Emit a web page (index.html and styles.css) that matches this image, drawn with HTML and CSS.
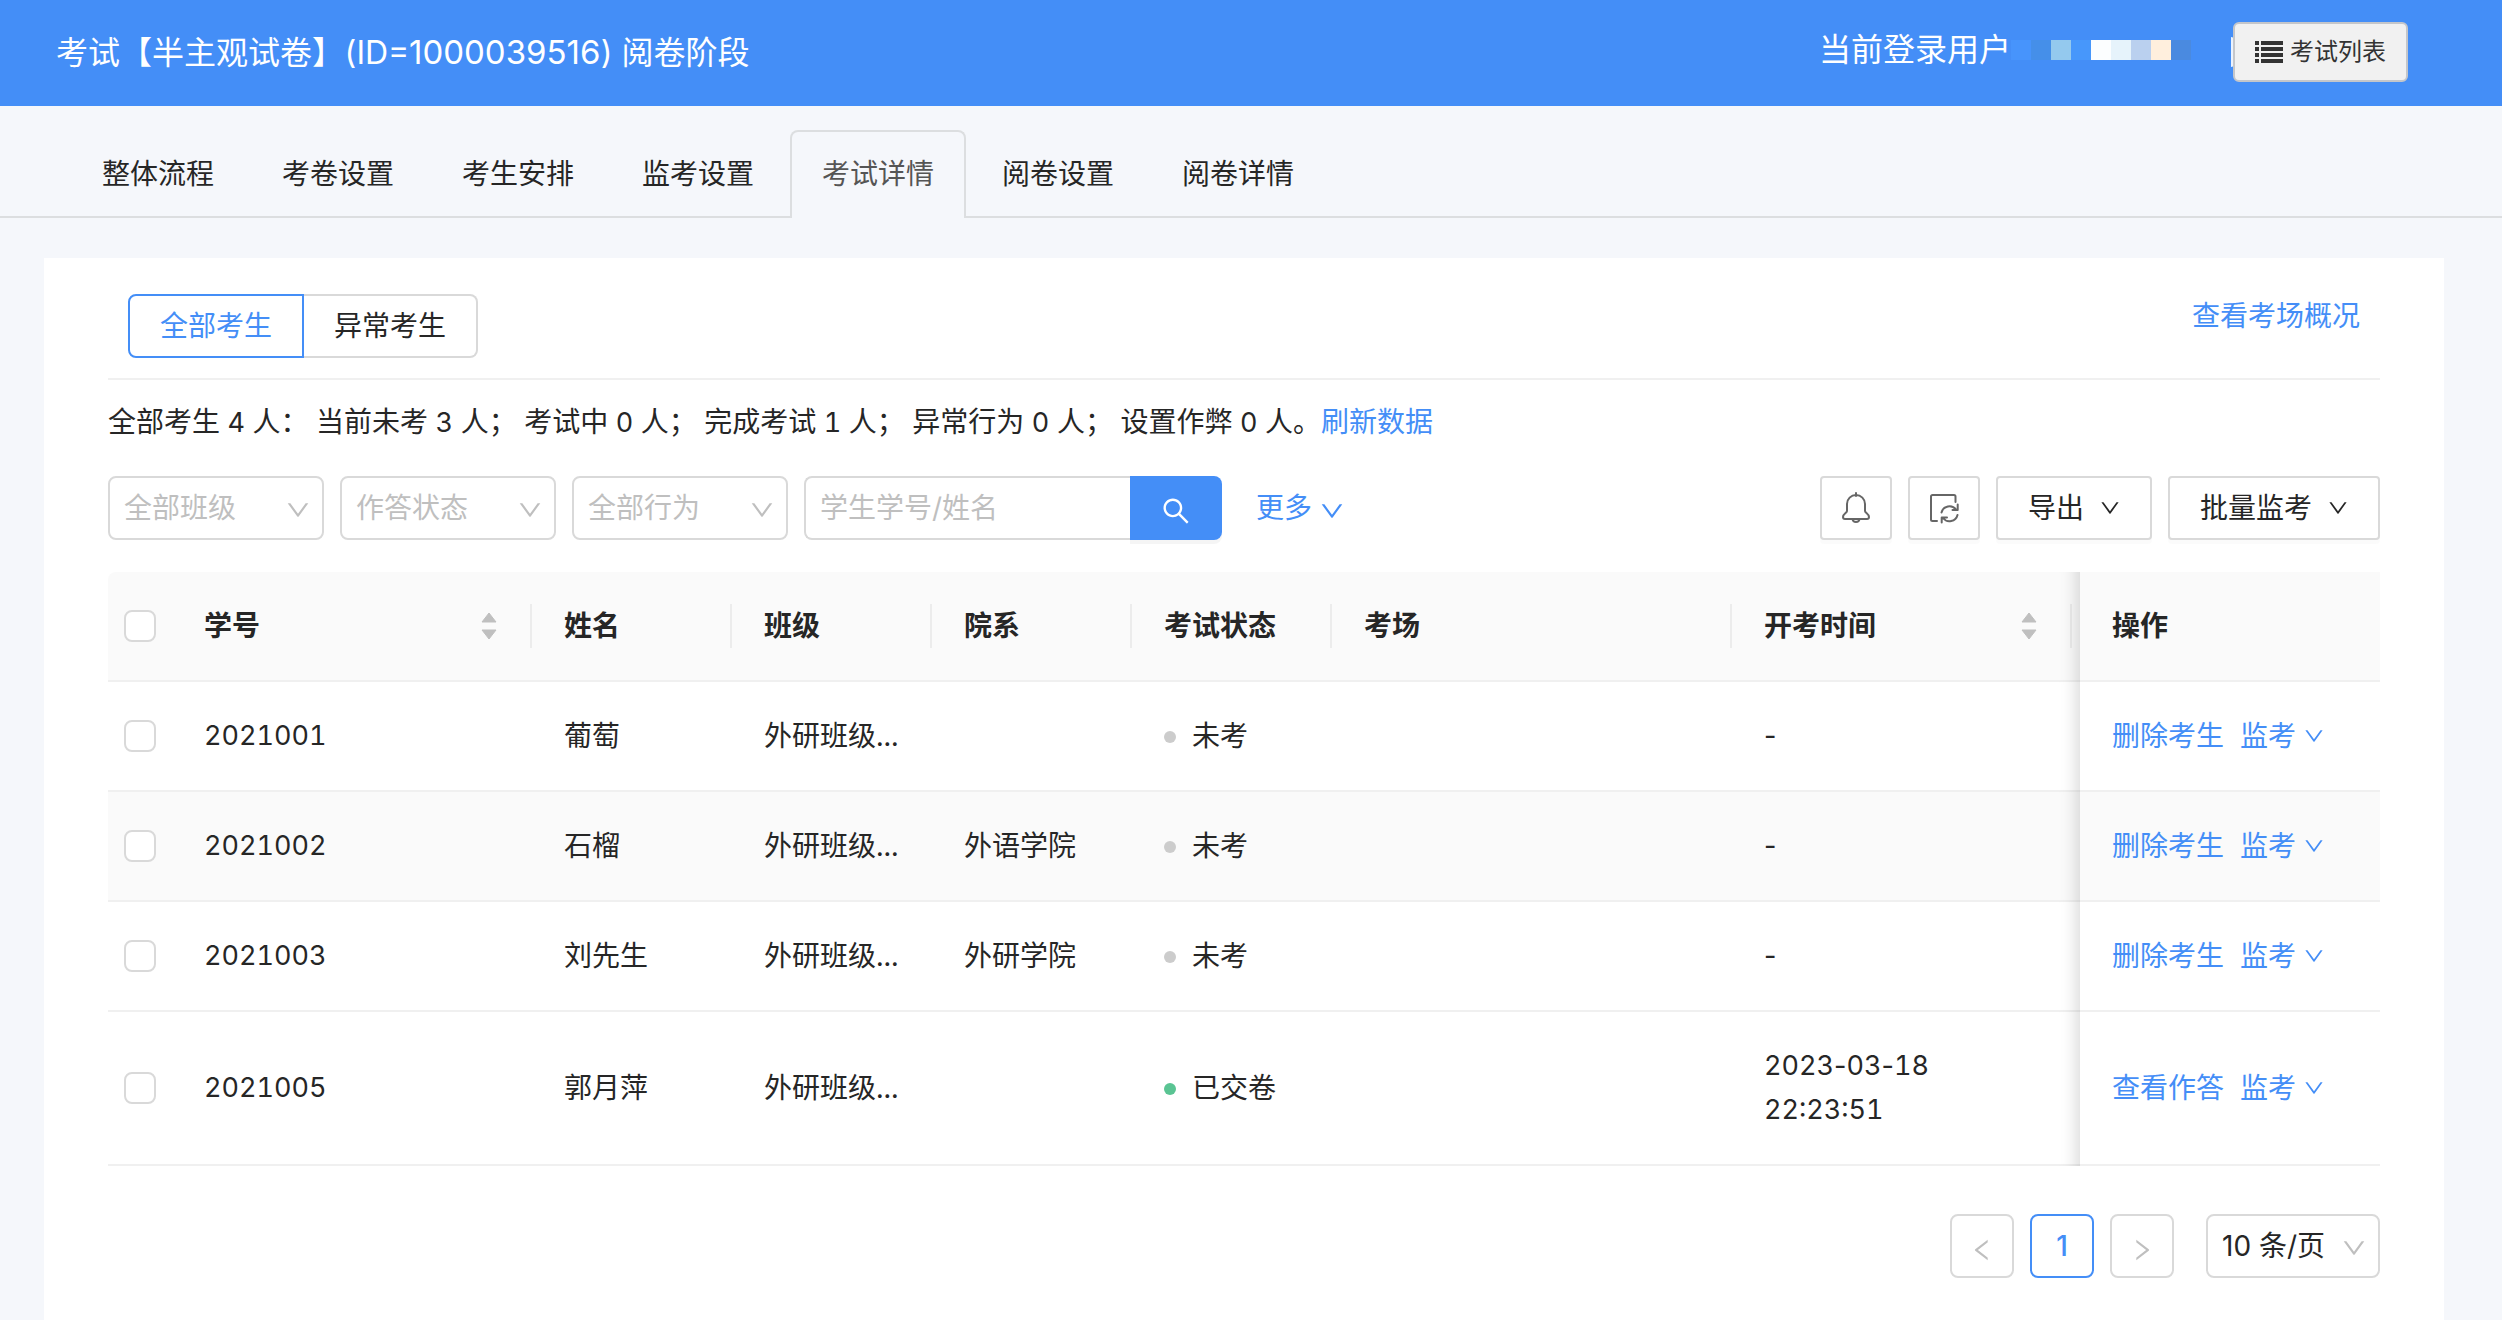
FILE: index.html
```html
<!DOCTYPE html>
<html lang="zh-CN">
<head>
<meta charset="utf-8">
<meta name="viewport" content="width=device-width, initial-scale=1">
<title>考试详情</title>
<link rel="stylesheet" href="styles.css">
</head>
<body>
<svg class="sprite" aria-hidden="true">
  <symbol id="down" viewBox="64 64 896 896"><path d="M884 256h-75c-5.100 0-9.900 2.500-12.900 6.600L512 654.200 227.900 262.600c-3-4.100-7.800-6.600-12.900-6.600h-75c-6.500 0-10.300 7.400-6.500 12.700l352.600 486.100c12.800 17.600 39 17.600 51.700 0l352.600-486.100c3.900-5.300.1-12.700-6.400-12.700z"/></symbol>
  <symbol id="left" viewBox="64 64 896 896"><path d="M724 218.300V141c0-6.700-7.700-10.400-12.900-6.300L260.300 486.800a31.860 31.860 0 0 0 0 50.300l450.800 352.100c5.300 4.100 12.900.4 12.900-6.300v-77.300c0-4.900-2.300-9.600-6.100-12.600l-360-281 360-281.100c3.800-3 6.100-7.700 6.100-12.600z"/></symbol>
  <symbol id="right" viewBox="64 64 896 896"><path transform="matrix(-1 0 0 1 1024 0)" d="M724 218.300V141c0-6.700-7.700-10.400-12.900-6.300L260.300 486.800a31.860 31.860 0 0 0 0 50.300l450.800 352.100c5.300 4.100 12.900.4 12.900-6.300v-77.300c0-4.900-2.300-9.600-6.100-12.600l-360-281 360-281.100c3.800-3 6.100-7.700 6.100-12.600z"/></symbol>
  <symbol id="sort" viewBox="0 0 16 28"><path d="M8 1l7 9H1zM8 27l7-9H1z" stroke="currentColor" stroke-width="1" stroke-linejoin="round"/></symbol>
</svg>

<header class="topbar">
  <h1 class="topbar-title">考试【半主观试卷】(ID=<span class="exam-id">1000039516</span>) 阅卷阶段</h1>
  <div class="topbar-user">
    <span class="user-label">当前登录用户</span>
    <span class="mosaic" aria-hidden="true"><i class="m1"></i><i class="m2"></i><i class="m3"></i><i class="m4"></i><i class="m5"></i><i class="m6"></i><i class="m7"></i><i class="m8"></i><i class="m9"></i></span>
  </div>
  <span class="sliver" aria-hidden="true"></span>
  <button class="list-btn" type="button">
    <svg width="28" height="22" viewBox="0 0 28 22"><path d="M0 0h4v4H0zM6 0h22v4H6zM0 6h4v4H0zM6 6h22v4H6zM0 12h4v4H0zM6 12h22v4H6zM0 18h4v4H0zM6 18h22v4H6z"/></svg>
    考试列表
  </button>
</header>

<nav class="tabs">
  <a class="tab" href="#">整体流程</a>
  <a class="tab" href="#">考卷设置</a>
  <a class="tab" href="#">考生安排</a>
  <a class="tab" href="#">监考设置</a>
  <a class="tab active" href="#">考试详情</a>
  <a class="tab" href="#">阅卷设置</a>
  <a class="tab" href="#">阅卷详情</a>
</nav>

<main class="card">
  <div class="card-head">
    <div class="segment">
      <button class="seg on" type="button">全部考生</button><button class="seg" type="button">异常考生</button>
    </div>
    <a class="link" href="#">查看考场概况</a>
  </div>

  <p class="stats">全部考生 <span class="num">4</span> 人：&nbsp;当前未考 <span class="num">3</span> 人；&nbsp;考试中 <span class="num">0</span> 人；&nbsp;完成考试 <span class="num">1</span> 人；&nbsp;异常行为 <span class="num">0</span> 人；&nbsp;设置作弊 <span class="num">0</span> 人。<a class="link" href="#">刷新数据</a></p>

  <div class="toolbar">
    <span class="picker"><select aria-label="班级"><option>全部班级</option></select><svg class="ic24"><use href="#down"/></svg></span>
    <span class="picker"><select aria-label="状态"><option>作答状态</option></select><svg class="ic24"><use href="#down"/></svg></span>
    <span class="picker"><select aria-label="行为"><option>全部行为</option></select><svg class="ic24"><use href="#down"/></svg></span>
    <form class="search">
      <input type="text" aria-label="搜索" placeholder="学生学号/姓名">
      <button type="button" aria-label="查询"><svg width="28" height="28" viewBox="64 64 896 896"><path d="M909.600 854.500L649.900 594.800C690.200 542.700 712 479 712 412c0-80.200-31.300-155.400-87.900-212.100-56.600-56.700-132-87.900-212.100-87.900s-155.500 31.300-212.100 87.900C143.200 256.500 112 331.800 112 412c0 80.100 31.300 155.500 87.900 212.100C256.500 680.800 331.800 712 412 712c67 0 130.600-21.800 182.700-62l259.700 259.600a8.200 8.200 0 0 0 11.600 0l43.600-43.500a8.200 8.200 0 0 0 0-11.600zM570.400 570.400C528 612.700 471.800 636 412 636s-116-23.300-158.400-65.600C211.300 528 188 471.800 188 412s23.300-116.100 65.600-158.400C296 211.300 352.200 188 412 188s116.100 23.200 158.400 65.600S636 352.200 636 412s-23.300 116.100-65.600 158.400z"/></svg></button>
    </form>
    <a class="link more" href="#">更多<svg class="ic24"><use href="#down"/></svg></a>
    <div class="actions">
      <button class="btn icon" type="button" aria-label="提醒"><svg width="32" height="32" viewBox="0 0 32 32"><path d="M16 1v3M7 19v-7a9 9 0 0 1 18 0v7c0 2 4 3 4 6 0 1-1 2-2 2H5c-1 0-2-1-2-2 0-3 4-4 4-6zM12.500 27c.5 4 6.500 4 7 0"/></svg></button>
      <button class="btn icon" type="button" aria-label="刷新"><svg width="32" height="32" viewBox="0 0 32 32"><path d="M9 29H4.500A1.500 1.500 0 0 1 3 27.500v-23A1.500 1.500 0 0 1 4.500 3H26a1.500 1.500 0 0 1 1.500 1.500V10M13.500 20.500a8.200 8.200 0 0 1 14.500-3M29.700 12.500V18H24.500M29.500 23a8.200 8.200 0 0 1-14.500 3M13.700 30.500V25.500H19"/></svg></button>
      <button class="btn" type="button">导出<svg class="ic20"><use href="#down"/></svg></button>
      <button class="btn" type="button">批量监考<svg class="ic20"><use href="#down"/></svg></button>
    </div>
  </div>

  <table class="grid">
    <colgroup><col class="c-check"><col class="c-id"><col class="c-std"><col class="c-std"><col class="c-std"><col class="c-std"><col><col class="c-time"><col class="c-ops"></colgroup>
    <thead>
      <tr>
        <th class="check"><input type="checkbox" aria-label="全选"></th>
        <th class="sep"><span class="sortable">学号<svg class="sort"><use href="#sort"/></svg></span></th>
        <th class="sep">姓名</th>
        <th class="sep">班级</th>
        <th class="sep">院系</th>
        <th class="sep">考试状态</th>
        <th class="sep">考场</th>
        <th class="sep time"><span class="sortable">开考时间<svg class="sort"><use href="#sort"/></svg></span></th>
        <th class="ops">操作</th>
      </tr>
    </thead>
    <tbody>
      <tr>
        <td class="check"><input type="checkbox" aria-label="2021001"></td><td class="num">2021001</td><td>葡萄</td><td>外研班级...</td><td></td>
        <td><span class="dot"></span>未考</td><td></td><td class="num"><span class="dash">-</span></td>
        <td class="ops"><div class="op-links"><a class="link" href="#">删除考生</a><a class="link" href="#">监考<svg class="ic20"><use href="#down"/></svg></a></div></td>
      </tr>
      <tr class="hover">
        <td class="check"><input type="checkbox" aria-label="2021002"></td><td class="num">2021002</td><td>石榴</td><td>外研班级...</td><td>外语学院</td>
        <td><span class="dot"></span>未考</td><td></td><td class="num"><span class="dash">-</span></td>
        <td class="ops"><div class="op-links"><a class="link" href="#">删除考生</a><a class="link" href="#">监考<svg class="ic20"><use href="#down"/></svg></a></div></td>
      </tr>
      <tr>
        <td class="check"><input type="checkbox" aria-label="2021003"></td><td class="num">2021003</td><td>刘先生</td><td>外研班级...</td><td>外研学院</td>
        <td><span class="dot"></span>未考</td><td></td><td class="num"><span class="dash">-</span></td>
        <td class="ops"><div class="op-links"><a class="link" href="#">删除考生</a><a class="link" href="#">监考<svg class="ic20"><use href="#down"/></svg></a></div></td>
      </tr>
      <tr>
        <td class="check"><input type="checkbox" aria-label="2021005"></td><td class="num">2021005</td><td>郭月萍</td><td>外研班级...</td><td></td>
        <td><span class="dot done"></span>已交卷</td><td></td><td class="num">2023<span class="dash">-</span>03<span class="dash">-</span>18<br>22:23:51</td>
        <td class="ops"><div class="op-links"><a class="link" href="#">查看作答</a><a class="link" href="#">监考<svg class="ic20"><use href="#down"/></svg></a></div></td>
      </tr>
    </tbody>
  </table>

  <div class="pager">
    <button class="page" type="button" aria-label="上一页" disabled><svg class="ic24"><use href="#left"/></svg></button>
    <button class="page current" type="button">1</button>
    <button class="page" type="button" aria-label="下一页" disabled><svg class="ic24"><use href="#right"/></svg></button>
    <span class="picker size"><select aria-label="每页条数"><option>10 条/页</option></select><svg class="ic24"><use href="#down"/></svg></span>
  </div>
</main>
</body>
</html>
```
FILE: styles.css
```css
:root {
  --blue: #448ef7;
  --text: #262626;
  --line: #d9d9d9;
  --soft: #f0f0f0;
  --muted: #bfbfbf;
}

* { box-sizing: border-box; }

body {
  display: flex;
  flex-direction: column;
  min-height: 100vh;
  margin: 0;
  background: #f5f7fb;
  color: var(--text);
  font: 28px/44px Inter, "Noto Sans CJK SC", sans-serif;
  font-variant-numeric: tabular-nums;
}

button, input, select { margin: 0; font: inherit; color: inherit; }
button { cursor: pointer; }
svg { flex: none; fill: currentColor; }
.sprite { position: absolute; width: 0; height: 0; }
.ic20 { width: 20px; height: 20px; }
.ic24 { width: 24px; height: 24px; }
.link { color: var(--blue); text-decoration: none; }
.num { font-size: 27px; }
.dash { font-variant-numeric: normal; }

/* Top bar */
.topbar {
  display: flex;
  align-items: center;
  height: 106px;
  padding: 0 94px 2px 56px;
  background: var(--blue);
  color: #fff;
}
.topbar-title {
  flex: 1;
  margin: 0;
  padding-top: 2px;
  font-size: 32px;
  font-weight: 400;
}
.exam-id { font-size: 33px; line-height: 1; font-variant-numeric: normal; }
.topbar-user {
  display: flex;
  align-items: center;
  margin-right: 40px;
  padding-bottom: 4px;
  font-size: 32px;
}
.mosaic { display: flex; }
.mosaic i { width: 20px; height: 20px; }
.m1 { background: #4794fc; }
.m2 { background: #458fe9; }
.m3 { background: #94c9ee; }
.m4 { background: #4797fb; }
.m5 { background: #fcfeff; }
.m6 { background: #e6f3fb; }
.m7 { background: #bad0ef; }
.m8 { background: #ffefdd; }
.m9 { background: #4a8ae0; }
.sliver {
  width: 3px;
  height: 30px;
  margin-right: -1px;
  border-radius: 0 3px 3px 0;
  background: #eaf2fe;
}
.list-btn {
  display: flex;
  align-items: center;
  gap: 7px;
  height: 60px;
  padding: 0 20px;
  border: 2px solid #c4c6ca;
  border-radius: 6px;
  background: #f1f1f1;
  color: #333;
  font-size: 24px;
}

/* Tabs */
.tabs {
  display: flex;
  gap: 4px;
  padding: 24px 70px 0;
  box-shadow: inset 0 -2px #dcdee0;
}
.tab {
  height: 88px;
  padding: 20px 30px;
  border: 2px solid transparent;
  border-bottom: 0;
  border-radius: 8px 8px 0 0;
  color: var(--text);
  text-decoration: none;
}
.tab.active {
  border-color: #dcdee0;
  background: #f5f7fb;
  color: #555;
}

/* Card */
.card {
  flex: 1;
  margin: 40px 58px 0 44px;
  padding: 36px 64px 42px;
  background: #fff;
}
.card-head {
  display: flex;
  justify-content: space-between;
  align-items: flex-start;
  padding: 0 20px 20px;
  border-bottom: 2px solid var(--soft);
}
.segment { display: flex; }
.seg {
  height: 64px;
  padding: 0 30px;
  border: 2px solid var(--line);
  border-left: 0;
  border-radius: 0 8px 8px 0;
  background: #fff;
}
.seg.on {
  border: 2px solid var(--blue);
  border-radius: 8px 0 0 8px;
  color: var(--blue);
}
.stats { margin: 20px 0 32px; }
.stats .num { line-height: 1; }

.toolbar { display: flex; gap: 16px; margin-bottom: 32px; }
.picker {
  display: grid;
  align-items: center;
  width: 216px;
  height: 64px;
  color: var(--muted);
}
.picker > * { grid-area: 1 / 1; }
.picker select {
  width: 100%;
  height: 64px;
  padding: 0 14px;
  border: 2px solid var(--line);
  border-radius: 8px;
  background: #fff;
  appearance: none;
}
.picker svg { justify-self: end; margin: 4px 14px 0 0; pointer-events: none; }

.search { display: flex; width: 418px; }
.search input {
  flex: 1;
  min-width: 0;
  padding: 0 14px;
  border: 2px solid var(--line);
  border-right: 0;
  border-radius: 8px 0 0 8px;
}
.search input::placeholder { color: var(--muted); opacity: 1; }
.search button {
  display: grid;
  place-items: center;
  width: 92px;
  padding: 6px 0 0;
  border: 0;
  border-radius: 0 8px 8px 0;
  background: var(--blue);
  color: #fff;
  box-shadow: 0 4px rgba(0, 0, 0, .04);
}
.more { display: flex; align-items: center; gap: 8px; margin-left: 18px; }
.more svg { margin-top: 6px; }
.actions { display: flex; gap: 16px; margin-left: auto; }
.btn {
  display: flex;
  align-items: center;
  gap: 16px;
  height: 64px;
  padding: 0 30px;
  border: 2px solid var(--line);
  border-radius: 4px;
  background: #fff;
  box-shadow: 0 4px rgba(0, 0, 0, .015);
}
.btn.icon { padding: 0 18px; color: #666; }
.btn.icon svg { fill: none; stroke: currentColor; stroke-width: 2; stroke-linecap: round; stroke-linejoin: round; }

/* Table */
.grid { width: 100%; table-layout: fixed; border-collapse: separate; border-spacing: 0; }
.c-check { width: 64px; }
.c-id { width: 360px; }
.c-std { width: 200px; }
.c-time { width: 348px; }
.c-ops { width: 300px; }
.grid th, .grid td {
  position: relative;
  padding: 32px;
  border-bottom: 2px solid var(--soft);
  text-align: left;
  font-weight: 400;
  white-space: nowrap;
}
.grid th { background: #fafafa; font-weight: 600; }
.grid th:first-child { border-top-left-radius: 8px; }
.hover td { background: #fafafa; }
.sep::before {
  content: "";
  position: absolute;
  top: 32px;
  right: 0;
  width: 2px;
  height: 44px;
  background: #ececec;
}
.sep.time::before { right: 8px; }
.sortable { display: flex; align-items: center; justify-content: space-between; margin-right: 3px; }
.time .sortable { margin-right: 11px; }
.sort { width: 16px; height: 28px; color: var(--muted); }

.grid .check { padding: 0 0 0 16px; }
.check input {
  display: block;
  width: 32px;
  height: 32px;
  margin: 0;
  border: 2px solid var(--line);
  border-radius: 8px;
  background: #fff;
  appearance: none;
}
.dot {
  display: inline-block;
  width: 12px;
  height: 12px;
  margin-right: 16px;
  border-radius: 50%;
  background: #ccc;
  vertical-align: 3px;
}
.dot.done { background: #5ac493; }

.ops::after {
  content: "";
  position: absolute;
  top: 0;
  bottom: -2px;
  left: -60px;
  width: 60px;
  box-shadow: inset -20px 0 16px -16px rgba(0, 0, 0, .15);
  pointer-events: none;
}
.op-links, .op-links a { display: flex; align-items: center; }
.op-links { gap: 16px; }
.op-links a { gap: 8px; }

/* Pagination */
.pager { display: flex; justify-content: flex-end; gap: 16px; margin-top: 48px; font-variant-numeric: normal; }
.page {
  display: grid;
  place-items: center;
  width: 64px;
  height: 64px;
  padding: 0;
  border: 2px solid var(--line);
  border-radius: 8px;
  background: #fff;
  color: var(--muted);
}
.page svg { margin-top: 8px; }
.page.current { border-color: var(--blue); color: var(--blue); font-weight: 500; }
.picker.size { width: 174px; margin-left: 16px; }
.size select { color: var(--text); }
```
